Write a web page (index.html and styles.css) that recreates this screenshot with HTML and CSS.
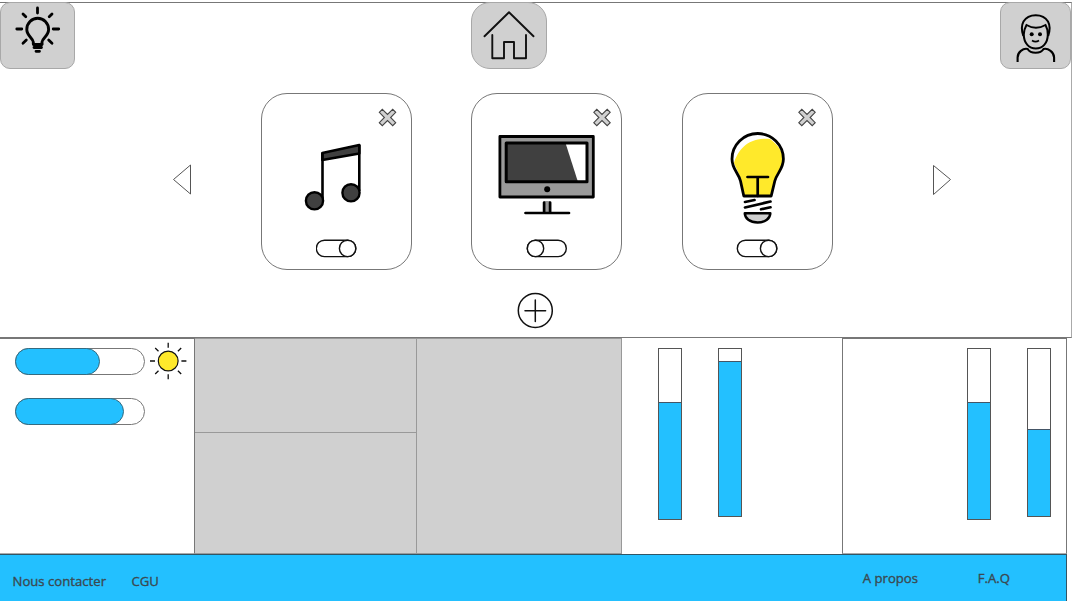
FILE: index.html
```html
<!DOCTYPE html>
<html lang="fr">
<head>
<meta charset="utf-8">
<title>Maison</title>
<link rel="stylesheet" href="styles.css">
</head>
<body>
<main class="home">
  <header class="topbar">
    <button class="tile tile-left" aria-label="Lumière">
      <svg width="73" height="65" viewBox="1 3 73 65" fill="none" stroke="#000" stroke-width="2.9" stroke-linecap="round">
        <path d="M33.300 44V42C33 38 26.800 36 26.800 29.500a10.900 11.200 0 0 1 21.800 0C48.600 36 42.300 38 42 42v2"/>
        <path d="M33.500 44.500h8.500M34 47.500h7.500M36 51.300h3.500M37.500 8v5M52 14l-2.800 2.800M23 14l2.800 2.800M16.800 29h5M53.200 29h5.500M23 43.200l3.300-3.200M52 43.200L48.700 40" stroke-width="2.800"/>
      </svg>
    </button>
    <button class="tile tile-home" aria-label="Accueil">
      <svg width="74" height="65" viewBox="472 3 74 65" fill="none" stroke="#111" stroke-width="1.9" stroke-linecap="round" stroke-linejoin="round">
        <path d="M484.500 36.300L509 12.300l24.500 24M492.300 35v23.300h11.700V42h10v16.300h12V35"/>
      </svg>
    </button>
    <button class="tile tile-right" aria-label="Profil">
      <svg width="69" height="65" viewBox="1001 3 69 65" fill="none" stroke="#000" stroke-width="2">
        <path d="M1023.300 36c-2-6-2.300-10 .2-14.500 5-8.500 19.500-8.500 24.500 0 2.500 4.500 2.200 8.500.2 14.500M1026.500 25c6 3.500 13 3.500 19 0 2 3.500 2.300 6 2.300 9.500 0 9-5.500 14-12 14s-12-5-12-14c0-3.500.7-6 2.700-9.500z"/>
        <path d="M1017.600 62v-4.500c0-5.500 5.500-9.500 10-8.500 3 5 13 5 16 0 4.500-1 10.500 3 10.500 8.500V62" stroke-width="2.100"/>
        <path d="M1032 40.500c2 1.300 5 1.300 7 0" stroke-width="1.700"/>
        <circle cx="1031.700" cy="34.300" r="2" fill="#000" stroke="none"/><circle cx="1040" cy="34.300" r="2" fill="#000" stroke="none"/>
      </svg>
    </button>
  </header>

  <section class="carousel">
    <svg class="arrow arrow-prev" width="20" height="32" viewBox="0 0 20 32"><path d="M1.500 15.500L18.500 1v29z"/></svg>
    <div class="cards">
      <article class="card">
        <svg class="close close-music" width="20" height="20" viewBox="-9.500 -9.500 20 20"><path class="cross" d="M-8.200-5.200L-5.200-8.200 0-3.100 5.200-8.200 8.200-5.200 3.100 0 8.200 5.200 5.200 8.200 0 3.100-5.200 8.200-8.200 5.200-3.100 0z"/></svg>
        <svg class="picture" width="149" height="96" viewBox="262 131 149 96" stroke="#000" stroke-linejoin="round">
          <path d="M322.300 153l37-8v8.500l-37 6.500z" fill="#404040" stroke-width="2.600"/>
          <path d="M322.500 153v46M359.300 145v46" fill="none" stroke-width="2.600"/>
          <circle cx="314.500" cy="200.800" r="8.600" fill="#404040" stroke-width="2.400"/>
          <circle cx="351" cy="192.800" r="8.600" fill="#404040" stroke-width="2.400"/>
        </svg>
        <svg class="toggle" width="42" height="19" viewBox="1 0 42 19"><rect x="1.300" y="1.200" width="39.500" height="16.400" rx="8.200"/><circle cx="32.600" cy="9.400" r="8.200"/></svg>
      </article>
      <article class="card">
        <svg class="close close-tv" width="20" height="20" viewBox="-10 -9.500 20 20"><path class="cross" d="M-8.200-5.200L-5.200-8.200 0-3.100 5.200-8.200 8.200-5.200 3.100 0 8.200 5.200 5.200 8.200 0 3.100-5.200 8.200-8.200 5.200-3.100 0z"/></svg>
        <svg class="picture" width="149" height="96" viewBox="472.500 131 149 96" stroke="#000" stroke-linejoin="round">
          <rect x="500.400" y="136.500" width="93.400" height="60.500" fill="#999" stroke-width="2.800"/>
          <rect x="506.500" y="143" width="81.300" height="39" fill="#404040" stroke="none"/>
          <path d="M566 143h21.500v39h-9z" fill="#fff" stroke="none"/>
          <rect x="506.700" y="143" width="80.800" height="38.800" fill="none" stroke-width="3"/>
          <circle cx="547.700" cy="189.200" r="3" fill="#000" stroke="none"/>
          <path d="M544.600 201v12h6v-12" fill="#999" stroke="none"/>
          <path d="M544.600 202.500v10M550.600 202.500v10M526 213h43.500" fill="none" stroke-width="2.700" stroke-linecap="round"/>
        </svg>
        <svg class="toggle toggle-mid" width="42" height="19" viewBox="0 0 42 19"><rect x="1.300" y="1.200" width="39" height="16.400" rx="8.200"/><circle cx="9.500" cy="9.400" r="8.200"/></svg>
      </article>
      <article class="card">
        <svg class="close close-lamp" width="20" height="20" viewBox="-10 -9.500 20 20"><path class="cross" d="M-8.200-5.200L-5.200-8.200 0-3.100 5.200-8.200 8.200-5.200 3.100 0 8.200 5.200 5.200 8.200 0 3.100-5.200 8.200-8.200 5.200-3.100 0z"/></svg>
        <svg class="picture" width="149" height="96" viewBox="683 131 149 96" stroke="#000" stroke-linejoin="round">
          <path d="M734 163c4-13 14-26 36-24 7 5 13 12 13 21 0 11-5 15-8 21l-4 14.500h-26.500l-4-18z" fill="#ffe92b" stroke="none"/>
          <path d="M743.800 196l-3.300-15c-2-8-8.500-12-8.500-22a25.700 25.500 0 0 1 51.400 0c0 10-6.500 14-8.600 22l-3.600 15z" fill="none" stroke-width="2.800"/>
          <path d="M747.500 177H768M757.700 177v19M745 202l9.500-2M745 207.500l25.500-6M761 209.300l9.500-2" fill="none" stroke-width="2.700" stroke-linecap="round"/>
          <path d="M744.800 213.300h25.500c0 5-5 9.200-12.700 9.200s-12.800-4.200-12.800-9.200z" fill="#d0d0d0" stroke-width="2.500"/>
        </svg>
        <svg class="toggle toggle-lamp" width="42" height="19" viewBox="0 0 42 19"><rect x="1.300" y="1.200" width="39.500" height="16.400" rx="8.200"/><circle cx="32.600" cy="9.400" r="8.200"/></svg>
      </article>
    </div>
    <svg class="arrow arrow-next" width="20" height="32" viewBox="0 0 20 32"><path d="M18.500 15.500L1.500 1.500v29z"/></svg>
  </section>

  <svg class="add" width="38" height="38" viewBox="-19.300 -19.500 38 38" fill="none" stroke="#111"><circle r="17" stroke-width="1.500"/><path d="M-10.300.3h20.600M0-10.500v21.500" stroke-width="1.500" stroke-linecap="round"/></svg>
</main>

<section class="dashboard">
  <div class="panel sliders">
    <div class="slider-row">
      <div class="slider"><div class="fill" style="width:85px"></div></div>
      <svg class="sun" width="38" height="38" viewBox="-19.200 -19 38 38" stroke="#111" fill="none"><circle r="9.900" fill="#ffe92b" stroke-width="1.200"/><path d="M0-18.200v5M0 13.200v5M-18.200 0h5M13.200 0h5M-13-13l3.300 3.300M13-13L9.700-9.700M-13 13l3.300-3.300M13 13L9.700 9.700" stroke-width="1.300"/></svg>
    </div>
    <div class="slider"><div class="fill" style="width:109px"></div></div>
  </div>
  <div class="stack"><div class="block block-top"></div><div class="block"></div></div>
  <div class="block block-tall"></div>
  <div class="gauges">
    <div class="gauge"><div class="level" style="height:117px"></div></div>
    <div class="gauge gauge-short"><div class="level" style="height:155px"></div></div>
  </div>
  <div class="panel gauges gauges-right">
    <div class="gauge"><div class="level" style="height:117px"></div></div>
    <div class="gauge gauge-short"><div class="level" style="height:87px"></div></div>
  </div>
</section>

<footer class="footer">
  <nav class="links"><a class="contact">Nous contacter</a><a class="cgu">CGU</a></nav>
  <nav class="links links-right"><a class="about">A propos</a><a class="faq">F.A.Q</a></nav>
</footer>
</body>
</html>
```
FILE: styles.css
```css
* { box-sizing: border-box; }
body { margin: 0; padding-top: 2px; width: 1073px; height: 601px; overflow: hidden; background: #fff; font-family: "Open Sans", "Noto Sans", sans-serif; }
svg { display: block; flex: none; }
.home { width: 1072px; height: 336px; border: solid #777; border-width: 1px 1px 1px 0; border-right-color: #aaa; }
.topbar { display: grid; grid-template-columns: 471px 529px 71px; margin-top: -1px; }
.tile { padding: 0; width: 75px; height: 67px; border: 1px solid #a8a8a8; background: #d0d0d0; border-radius: 10px; }
.tile-home { width: 76px; border-radius: 19px; }
.tile-right { width: 71px; }
.carousel { display: flex; align-items: center; margin: 24px 0 0 172px; }
.cards { display: flex; gap: 59.3px; margin: 0 99.4px 0 69px; }
.card { width: 151px; height: 177px; border: 1px solid #777; border-radius: 26px; display: flex; flex-direction: column; align-items: center; padding-top: 14px; }
.close { align-self: flex-end; }
.close-music { margin-right: 13px; }
.close-tv { margin-right: 9px; }
.close-lamp { margin-right: 15px; }
.cross { fill: #d0d0d0; stroke: #444; stroke-width: 1.1; }
.picture { margin-top: 3px; }
.toggle { margin-top: 12px; fill: #fff; stroke: #111; stroke-width: 1.4; }
.arrow path { fill: #fff; stroke: #555; stroke-width: 1; }
.arrow-prev { margin-bottom: 4px; }
.arrow-next { margin-bottom: 3px; }
.add { margin: 21px 0 0 516px; }
.dashboard { display: grid; grid-template-columns: 195px 222px 205px 220px 225px; height: 216px; width: 1067px; }
.panel { border: 1px solid #777; border-bottom-color: #aaa; }
.sliders { padding: 7px 0 0 14.5px; border-left: 0; }
.slider-row { display: flex; align-items: center; height: 30px; margin-bottom: 22px; }
.slider { width: 130px; height: 27px; border: 1px solid #777; border-radius: 14px; }
.fill { height: 27px; margin: -1px 0 0 -1px; background: #23c0ff; border: 1px solid #356b80; border-radius: 14px; }
.sun { margin-left: 4px; }
.stack { display: grid; grid-template-rows: 95px 121px; }
.block { background: #d0d0d0; border: solid #999; border-width: 0 1px 1px 0; }
.block-top, .block-tall { border-top-width: 1px; }
.gauges { display: flex; align-items: flex-start; gap: 36px; padding: 10px 0 0 36px; }
.gauges-right { padding: 9px 0 0 124px; }
.gauge { display: flex; align-items: flex-end; width: 24px; height: 172px; border: 1px solid #555; }
.gauge-short { height: 169px; }
.level { width: 100%; background: #23c0ff; border-top: 1px solid #456; }
.footer { width: 1067px; height: 47px; background: #23c0ff; border: solid #315565; border-width: 1px 1px 0 0; display: flex; justify-content: space-between; font-size: 13.15px; line-height: 18px; color: #3b4950; -webkit-text-stroke: .35px #3b4950; }
.links { display: flex; padding: 17px 0 0 12.5px; }
.links-right { padding: 14px 56px 0 0; }
.contact { width: 119px; }
.about { width: 115px; }
```
